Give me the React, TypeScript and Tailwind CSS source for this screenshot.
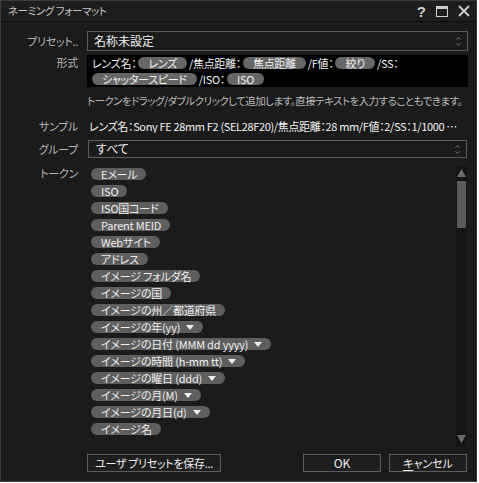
import { ChevronUp, ChevronDown } from "lucide-react";

const font = "font-['Noto_Sans_CJK_JP','Liberation_Sans',sans-serif] [font-feature-settings:'palt']";

const tokens: { label: string; menu?: boolean }[] = [
  { label: "Eメール" },
  { label: "ISO" },
  { label: "ISO国コード" },
  { label: "Parent MEID" },
  { label: "Webサイト" },
  { label: "アドレス" },
  { label: "イメージ フォルダ名" },
  { label: "イメージの国" },
  { label: "イメージの州／都道府県" },
  { label: "イメージの年(yy)", menu: true },
  { label: "イメージの日付 (MMM dd yyyy)", menu: true },
  { label: "イメージの時間 (h-mm tt)", menu: true },
  { label: "イメージの曜日 (ddd)", menu: true },
  { label: "イメージの月(M)", menu: true },
  { label: "イメージの月日(d)", menu: true },
  { label: "イメージ名" },
];

function Pill({ children }: { children: React.ReactNode }) {
  return (
    <span className="inline-flex h-[12px] items-center rounded-full bg-[#666666] px-[10px] text-[11px] leading-none text-[#f0f0f0]">
      {children}
    </span>
  );
}

function UpDown() {
  return (
    <span className="flex flex-col items-center text-[#bbbbbb]">
      <ChevronUp className="-mb-[1px] h-[7px] w-[9px]" strokeWidth={2} />
      <ChevronDown className="h-[7px] w-[9px]" strokeWidth={2} />
    </span>
  );
}

function Row({ label, children, className = "" }: { label: string; children: React.ReactNode; className?: string }) {
  return (
    <div className={`flex shrink-0 ${className}`}>
      <div className="w-[77px] shrink-0 whitespace-nowrap text-right text-[11px] leading-[14px] tracking-[-0.3px] text-[#b8b8b8]">
        {label}
      </div>
      <div className="ml-[9px] min-w-0 flex-1">{children}</div>
    </div>
  );
}

export default function App() {
  return (
    <div className={`${font} flex h-[482px] w-[477px] flex-col border border-[#3c3c3c] bg-[#1b1b1b] leading-none text-[#dddddd]`}>
      <header className="flex h-[21px] shrink-0 items-center border-b border-[#0c0c0c] bg-[#1e1e1e] pl-[7px] pr-[6px]">
        <span className="flex-1 text-[10.5px] tracking-[-0.4px] text-[#c4c4c4]">ネーミング フォーマット</span>
        <div className="flex items-center gap-[10px] text-[#cfcfcf]">
          <span className="font-['Liberation_Sans'] text-[15px] font-bold leading-none">?</span>
          <span className="h-[11px] w-[12px] border-[1.5px] border-t-[3px] border-[#cfcfcf]" />
          <svg width="12" height="12" viewBox="0 0 12 12">
            <path d="M1 1 L11 11 M11 1 L1 11" stroke="#cfcfcf" strokeWidth="1.8" />
          </svg>
        </div>
      </header>

      <div className="flex flex-1 flex-col pr-[8px] pt-[9px]">
        <Row label="プリセット.." className="h-[20px] items-center">
          <div className="flex h-[20px] items-center border border-[#5c5c5c] pl-[6px] pr-[4px]">
            <span className="flex-1 text-[12px] text-[#eeeeee]">名称未設定</span>
            <UpDown />
          </div>
        </Row>

        <Row label="形式" className="mt-[4px] h-[32px] items-start">
          <div className="flex h-[32px] flex-col justify-center gap-[4px] bg-black pl-[5px] text-[11px] leading-none tracking-[-0.3px] text-[#f2f2f2]">
            <div className="flex h-[12px] items-center gap-[2px]">
              <span>レンズ名：</span>
              <Pill>レンズ</Pill>
              <span>/焦点距離：</span>
              <Pill>焦点距離</Pill>
              <span>/F値：</span>
              <Pill>絞り</Pill>
              <span>/SS：</span>
            </div>
            <div className="flex h-[12px] items-center gap-[2px]">
              <Pill>シャッタースピード</Pill>
              <span>/ISO：</span>
              <Pill>ISO</Pill>
            </div>
          </div>
        </Row>

        <Row label="" className="mt-[7px] h-[14px] items-center">
          <p className="whitespace-nowrap text-[10.5px] leading-[14px] tracking-[-0.55px] text-[#b8b8b8]">
            トークンをドラッグ/ダブルクリックして追加します。直接テキストを入力することもできます。
          </p>
        </Row>

        <Row label="サンプル" className="mt-[11px] h-[14px] items-center">
          <p className="truncate pl-[2px] pr-[10px] text-[11px] leading-[14px] tracking-[-0.35px] text-[#f2f2f2]">
            レンズ名：Sony FE 28mm F2 (SEL28F20)/焦点距離：28 mm/F値：2/SS：1/1000 秒/ISO：100
          </p>
        </Row>

        <Row label="グループ" className="mt-[7px] h-[18px] items-center">
          <div className="mx-[1px] flex h-[18px] items-center border border-[#5c5c5c] pl-[7px] pr-[4px]">
            <span className="flex-1 text-[12px] text-[#eeeeee]">すべて</span>
            <UpDown />
          </div>
        </Row>

        <Row label="トークン" className="mt-[8px] h-[281px] items-start">
          <div className="flex h-[281px]">
            <div className="flex flex-1 flex-col items-start gap-[5px] pl-[4px] pt-[2px]">
              {tokens.map((t) => (
                <span
                  key={t.label}
                  className="inline-flex h-[12px] shrink-0 items-center gap-[6px] rounded-full bg-[#5e5e5e] pl-[10px] pr-[9px] text-[11px] leading-none tracking-[-0.2px] text-[#eeeeee]"
                >
                  {t.label}
                  {t.menu && (
                    <svg width="8" height="5" viewBox="0 0 8 5">
                      <path d="M0 0 H8 L4 5 Z" fill="#eeeeee" />
                    </svg>
                  )}
                </span>
              ))}
            </div>
            <div className="mr-[1px] flex w-[11px] flex-col items-center bg-[#141414]">
              <svg width="9" height="9" viewBox="0 0 9 9" className="mt-[2px]">
                <path d="M0 9 H9 L4.5 1 Z" fill="#6a6a6a" />
              </svg>
              <div className="mt-[4px] h-[47px] w-[9px] bg-[#5a5a5a]" />
              <div className="flex-1" />
              <svg width="9" height="9" viewBox="0 0 9 9" className="mb-[3px]">
                <path d="M0 0 H9 L4.5 8 Z" fill="#6a6a6a" />
              </svg>
            </div>
          </div>
        </Row>

        <div className="mt-[7px] flex shrink-0 items-center pl-[86px]">
          <button className="h-[18px] w-[134px] border border-[#5c5c5c] bg-[#1e1e1e] text-[11px] leading-none tracking-[-0.3px] text-[#eeeeee]">
            ユーザ プリセットを保存...
          </button>
          <div className="flex-1" />
          <button className="h-[18px] w-[78px] border border-[#5c5c5c] bg-[#1e1e1e] text-[12px] leading-none text-[#eeeeee]">
            OK
          </button>
          <button className="ml-[8px] mr-[1px] h-[18px] w-[78px] border border-[#5c5c5c] bg-[#1e1e1e] text-[11px] leading-none text-[#eeeeee]">
            <span className="underline underline-offset-2">キ</span>ャンセル
          </button>
        </div>
      </div>
    </div>
  );
}
